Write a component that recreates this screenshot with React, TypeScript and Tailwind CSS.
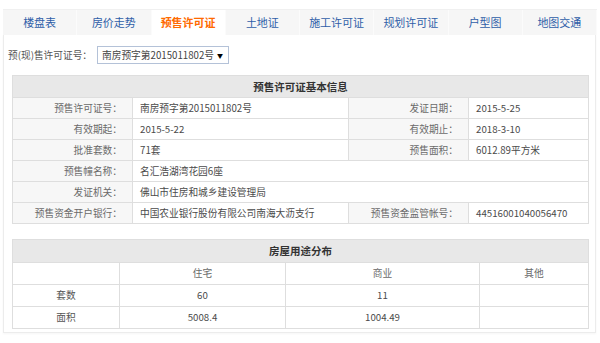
import React from "react";

const tabs = ["楼盘表", "房价走势", "预售许可证", "土地证", "施工许可证", "规划许可证", "户型图", "地图交通"];

const infoRows: [string, string, string?, string?][] = [
  ["预售许可证号：", "南房预字第2015011802号", "发证日期：", "2015-5-25"],
  ["有效期起：", "2015-5-22", "有效期止：", "2018-3-10"],
  ["批准套数：", "71套", "预售面积：", "6012.89平方米"],
  ["预售幢名称：", "名汇浩湖湾花园6座"],
  ["发证机关：", "佛山市住房和城乡建设管理局"],
  ["预售资金开户银行：", "中国农业银行股份有限公司南海大沥支行", "预售资金监管帐号：", "44516001040056470"],
];

const usageRows = [
  ["套数", "60", "11", ""],
  ["面积", "5008.4", "1004.49", ""],
];

export default function App() {
  const font = { fontFamily: '"Noto Sans CJK SC", "Noto Sans", sans-serif' };
  const labelCell = "h-[21px] border border-[#dedede] bg-[#f7f7f7] pr-[10px] text-right text-[#6a6a6a]";
  const valueCell = "h-[21px] border border-[#dedede] bg-white pl-[7px] text-left text-[#4a4a4a]";
  const cell = "h-[22px] border border-[#dedede] text-center text-[#4a4a4a]";

  return (
    <div className="w-[600px] h-[343px] bg-white pt-[9px] pl-[3px]" style={font}>
      {/* Tabs */}
      <div className="flex w-[594px] h-[26px] bg-[#f6f6f6] border-t border-[#f0f0f0]">
        {tabs.map((t, i) => (
          <div
            key={t}
            className={
              "flex-1 flex items-center justify-center text-[11px] border-r border-[#fbfbfb] " +
              (i === 2 ? "bg-white text-[#ff6a00] font-bold" : "text-[#2f5ea8]")
            }
          >
            {t}
          </div>
        ))}
      </div>

      {/* Content */}
      <div className="w-[593px] h-[298px] bg-white border border-t-0 border-[#ececec] pl-[8px] pr-[7px] shadow-[0_1px_2px_rgba(0,0,0,0.04)]">
        <div className="flex items-center h-[40px] -ml-[4px] text-[9.7px] text-[#555]">
          <span>预(现)售许可证号：</span>
          <div className="ml-[5px] flex items-center h-[18px] w-[132px] border border-[#b4c2d8] pl-[4px] pr-[5px] text-[#444]">
            <span className="flex-1">南房预字第2015011802号</span>
            <span className="text-[6px] text-black">▼</span>
          </div>
        </div>

        <table className="w-[576px] table-fixed border-collapse text-[9.7px]">
          <colgroup>
            <col className="w-[120px]" />
            <col className="w-[216px]" />
            <col className="w-[120px]" />
            <col className="w-[120px]" />
          </colgroup>
          <thead>
            <tr>
              <th colSpan={4} className="h-[22px] border border-[#dedede] bg-[#e8e8e8] text-center text-[10.5px] font-bold text-[#333]">
                预售许可证基本信息
              </th>
            </tr>
          </thead>
          <tbody>
            {infoRows.map((r, i) => (
              <tr key={i}>
                <td className={labelCell}>{r[0]}</td>
                {r[2] ? (
                  <>
                    <td className={valueCell}>{r[1]}</td>
                    <td className={labelCell}>{r[2]}</td>
                    <td className={valueCell}>{r[3]}</td>
                  </>
                ) : (
                  <td colSpan={3} className={valueCell}>{r[1]}</td>
                )}
              </tr>
            ))}
          </tbody>
        </table>

        <table className="mt-[15px] w-[576px] table-fixed border-collapse text-[9.7px]">
          <colgroup>
            <col className="w-[107px]" />
            <col className="w-[166px]" />
            <col className="w-[194px]" />
            <col className="w-[109px]" />
          </colgroup>
          <thead>
            <tr>
              <th colSpan={4} className="h-[23px] border border-[#dedede] bg-[#e8e8e8] text-center text-[10.5px] font-bold text-[#333]">
                房屋用途分布
              </th>
            </tr>
          </thead>
          <tbody>
            <tr>
              <td className={cell}></td>
              <td className={cell + " text-[#6a6a6a]"}>住宅</td>
              <td className={cell + " text-[#6a6a6a]"}>商业</td>
              <td className={cell + " text-[#6a6a6a]"}>其他</td>
            </tr>
            {usageRows.map((r) => (
              <tr key={r[0]}>
                {r.map((c, j) => (
                  <td key={j} className={cell + (j === 0 ? " text-[#555]" : "")}>{c}</td>
                ))}
              </tr>
            ))}
          </tbody>
        </table>
      </div>
    </div>
  );
}
